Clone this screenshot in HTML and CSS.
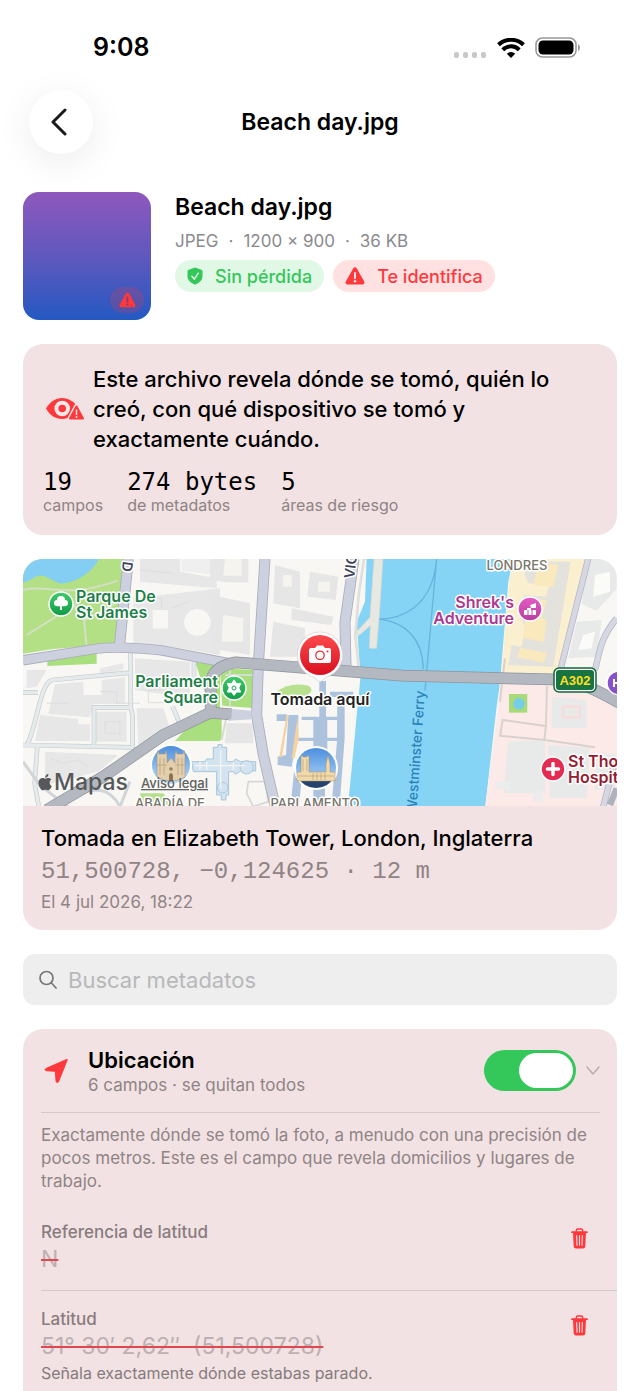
FILE: index.html
```html
<!DOCTYPE html>
<html lang="es">
<head>
<meta charset="utf-8">
<meta name="viewport" content="width=device-width, initial-scale=1">
<title>Beach day.jpg</title>
<link rel="stylesheet" href="styles.css">
</head>
<body>
<svg class="defs" width="0" height="0" aria-hidden="true">
  <symbol id="warning" viewBox="0 0 20 18"><path d="M8.3 1.2a2 2 0 0 1 3.4 0l7.5 13.3a2 2 0 0 1-1.7 3h-15a2 2 0 0 1-1.7-3z" fill="currentColor"/><path class="mark" d="M10 6v5.200" stroke-width="2" stroke-linecap="round"/><circle class="mark-dot" cx="10" cy="14.300" r="1.300"/></symbol>
  <symbol id="trash" viewBox="0 0 17 21"><path d="M5.300 3.800V2.400Q5.300 1 6.700 1h3.600q1.400 0 1.400 1.400v1.400" fill="none" stroke="currentColor" stroke-width="1.500"/><path d="M1 4.200h15" stroke="currentColor" stroke-width="1.700" stroke-linecap="round"/><path d="M2 4.500h13l-.7 13.800q-.1 2.200-2.300 2.200H5q-2.200 0-2.300-2.200z" fill="currentColor"/><path d="M5.700 7.500l.3 9.800M8.500 7.500v9.800M11.300 7.500l-.3 9.800" stroke="#f2e2e3" stroke-width="1.100" stroke-linecap="round"/></symbol>
</svg>

<header class="top">
  <div class="status">
    <span class="time">9:08</span>
    <span class="status-icons">
      <svg width="33" height="8" viewBox="0 0 33 8" fill="#c8c8c8"><rect x="0" y="1" width="5" height="6" rx="2"/><rect x="9" y="1" width="5" height="6" rx="2"/><rect x="18" y="1" width="5" height="6" rx="2"/><rect x="27" y="1" width="5" height="6" rx="2"/></svg>
      <svg class="wifi" width="28" height="20" viewBox="0 0 28 20" fill="none" stroke="#000" stroke-width="4"><path d="M1.500 6.800a18 18 0 0 1 25 0"/><path d="M5.800 11.800a11.500 11.500 0 0 1 16.400 0"/><path d="M9.800 15.800a6 6 0 0 1 8.400 0L14 20z" fill="#000" stroke="none"/></svg>
      <svg width="46" height="22" viewBox="0 0 46 22"><rect x="1" y="1" width="40" height="19" rx="6.500" fill="none" stroke="#999" stroke-width="1.600"/><rect x="3.500" y="3.500" width="35" height="14" rx="4.500"/><path d="M43 7q2 1 2 3.500T43 14z" fill="#999"/></svg>
    </span>
  </div>
  <nav class="nav">
    <button class="back" type="button" aria-label="Atrás"><svg width="18" height="28" viewBox="0 0 18 28"><path d="M15 2L3 14l12 12" fill="none" stroke="#1a1a1a" stroke-width="3" stroke-linecap="round" stroke-linejoin="round"/></svg></button>
    <h1 class="nav-title">Beach day.jpg</h1>
  </nav>
</header>

<main class="content">
  <section class="file">
    <div class="thumb"><span class="thumb-badge"><svg width="17" height="16"><use href="#warning"/></svg></span></div>
    <div class="file-info">
      <h2 class="file-name">Beach day.jpg</h2>
      <p class="file-meta"><span>JPEG</span><span>·</span><span>1200 × 900</span><span>·</span><span>36 KB</span></p>
      <div class="chips">
        <span class="chip chip-ok"><svg width="16" height="18" viewBox="0 0 16 18"><path d="M8 .5l6.300 2.200q1.200.4 1.200 1.600v5.200q0 5-7.500 8.200Q.5 14.500.5 9.500V4.300q0-1.200 1.200-1.600z" fill="currentColor"/><path d="M4.900 9.300l2.400 2.900 4-6" fill="none" stroke="#e1f8e7" stroke-width="1.500" stroke-linecap="round" stroke-linejoin="round"/></svg>Sin pérdida</span>
        <span class="chip chip-risk"><svg width="20" height="18"><use href="#warning"/></svg>Te identifica</span>
      </div>
    </div>
  </section>

  <section class="card summary">
    <div class="summary-lead">
      <svg class="eye" width="42" height="26" viewBox="0 0 42 26"><path d="M3 12.500C7 5.500 13 2 19 2c6.500 0 12.500 3.500 16.500 10.500C31.500 19.500 25.500 23 19 23S7 19.500 3 12.500z" fill="#ff383c"/><circle cx="19.200" cy="12.500" r="5.800" fill="none" stroke="#f8e8e8" stroke-width="4"/><circle cx="19.200" cy="12.500" r="3" fill="#ff383c"/><path d="M33.500 10.500L40 22.500H27z" fill="#f2e2e3" stroke="#f2e2e3" stroke-width="5" stroke-linejoin="round"/><path d="M33.500 10.500L40 22.500H27z" fill="#ff383c" stroke="#ff383c" stroke-width="2" stroke-linejoin="round"/><path d="M33.500 14v4.600" stroke="#f8e8e8" stroke-width="1.500" stroke-linecap="round"/><circle cx="33.500" cy="21" r="1" fill="#f8e8e8"/></svg>
      <p class="summary-text">Este archivo revela dónde se tomó, quién lo creó, con qué dispositivo se tomó y exactamente cuándo.</p>
    </div>
    <dl class="stats">
      <div class="stat"><dd>19</dd><dt>campos</dt></div>
      <div class="stat"><dd>274 bytes</dd><dt>de metadatos</dt></div>
      <div class="stat"><dd>5</dd><dt>áreas de riesgo</dt></div>
    </dl>
  </section>

  <section class="card place">
    <svg class="map" viewBox="0 0 594 247" preserveAspectRatio="xMidYMid slice" role="img" aria-label="Mapa de Westminster">
      <defs>
        <linearGradient id="sky" x2="0" y2="1"><stop stop-color="#4b8fe0"/><stop offset="1" stop-color="#bfe0f8"/></linearGradient>
        <linearGradient id="redPin" x2="0" y2="1"><stop stop-color="#fb4b4c"/><stop offset="1" stop-color="#d90f20"/></linearGradient>
        <linearGradient id="greenPin" x2="0" y2="1"><stop stop-color="#42cb6b"/><stop offset="1" stop-color="#119b48"/></linearGradient>
        <linearGradient id="pinkPin" x2="0" y2="1"><stop stop-color="#e65cc6"/><stop offset="1" stop-color="#b83da0"/></linearGradient>
      </defs>
      <g transform="scale(.3333) translate(-9 -12)">
        <rect x="9" y="12" width="1790" height="750" fill="#f8f7f3"/>
        <!-- west bank -->
        <path d="M9 12h311l-27 255-193 15-91 14z" fill="#b3e085"/>
        <path d="M9 12h228c-20 38-60 68-112 74-34-8-58-42-88-14L9 84z" fill="#83cef2"/>
        <path d="M9 105c80-20 120 30 285-28M192 195l8 80M20 240l160-100M160 150l35 45 110-60" fill="none" stroke="#d5dec6" stroke-width="6"/>
        <path d="M82 316l148-24v34l-148 7zM525 318l75 5v235H465l60-65 45-35z" fill="#a9df7f"/>
        <g fill="#e7e7e8">
          <path d="M360 12h120v38l110 20v30l-230-20zM340 130l260-30v200l-150-25-110-10z"/>
          <path d="M105 388l85-8v40h55v-45l70-8v80h-95l-10 40-125-10zM60 480l115 12v16h35v50H45zM228 470h92v90h-92zM345 310l165 10v110l-165-25zM350 460h80l20 60-95 50zM75 590l220 10-60 50-160 40zM240 340l70-15v20l-70 14zM20 345h60l-30 50-30 5z"/>
        </g>
        <rect x="398" y="165" width="46" height="56" fill="#f8f7f3"/><circle cx="532" cy="202" r="40" fill="#f8f7f3"/>
        <path d="M485 12h110v50l-110-15z" fill="#efefef"/>
        <g fill="none" stroke="#c5ccce" stroke-width="14" stroke-linejoin="round"><path d="M22 568c30-60 38-185 75-193l235-22M332 292v165l6 25v95L9 570M332 457H222v112M52 575l-8 110 12 68M9 412h45M458 455l20 48M522 320v60"/></g>
        <g fill="none" stroke="#e5ebec" stroke-width="10" stroke-linejoin="round"><path d="M22 568c30-60 38-185 75-193l235-22M332 292v165l6 25v95L9 570M332 457H222v112M52 575l-8 110 12 68M9 412h45M458 455l20 48M522 320v60"/></g>
        <path d="M9 620l50 70 90 70M140 730c90-40 130-30 160 25M330 680l-30 75" fill="none" stroke="#d2d5d7" stroke-width="9"/>
        <g fill="none" stroke="#dddede" stroke-width="3"><path d="M240 410h50v35h70M80 445h70M255 500h45v35h-45zM385 405h60v38h-60zM90 610l40 15 45-10 30 20M370 130h55v30M455 160l50-20M360 45l100 10"/></g>
        <path d="M360 715h70l30 40h-90z" fill="#b5df8d"/>
        <g fill="#d3e4f0" stroke="#a7c6da" stroke-width="3"><path d="M515 620h40l5-8h20v-35h14v-8h12v8h14v43h20l6-8 16 8h45v28h-45l-16 10-6-8h-14v70h-8v15h-14v-15h-14v-70h-70z"/><circle cx="680" cy="637" r="20"/><circle cx="608" cy="698" r="16"/></g>
        <path d="M525 632h150M602 585v115M540 620v24M560 620v24M640 622v24" fill="none" stroke="#f4f4f0" stroke-width="4"/>
        <!-- centre blocks -->
        <g transform="translate(570 0)">
          <g fill="#e6e6e6">
            <path d="M0 12h115v70H45l-45-10zM5 120l115 25v155L0 280zM195 30l75 20v110l-80-15zM300 50l85 15-8 70-85-10zM245 160l125 25-6 25-120-15zM190 200l95 20v85H180zM50 505h80v60H45z"/>
          </g>
          <g fill="#f5f4ef"><path d="M45 12h50v50H40zM40 180l60 10v70H35zM325 80h35v30h-37zM220 60h25v35h-27z"/></g>
          <path d="M30 340l112 5v115l-105-8zM0 500l35-10v65H0z" fill="#a9df7f"/>
          <path d="M60 345v110M45 360h95M50 485l-15 70" stroke="#d6ddd0" stroke-width="6" fill="none"/>
          <path d="M200 410q40-30 95-18 18 10 2 25l-40 18h-30l-30-15z" fill="#b7e18f"/>
          <g fill="#adc2dd"><path d="M235 480h30v45l-20 110-42-5v-25l25-5zM328 378h20v110h-20zM310 488h42v100h-42zM275 485h115v10H275zM382 440h22v110l-15 200h-24l16-190zM262 548h125v10H262zM200 478h30v20h-30zM360 410h70v16h-70zM252 650l25 2-10 100h-25zM310 700h35v52h-35z"/></g>
          <path d="M236 480h-6l-22 125h8zM262 490l5 60-14 60h-8z" fill="#f3d3a1"/>
          <path d="M115 680h50l10 60-45 15-20-40z" fill="none" stroke="#d8d8d3" stroke-width="5"/>
        </g>
        <!-- Thames -->
        <path d="M1040 12h440l-15 68-25 305-10 70-35 307H983l12-120 15-160 12-120-2-22-10-140 25-60z" fill="#85d4f6"/>
        <path d="M1040 12h-8l-16 110-10 120 12 110" fill="none" stroke="#dfe0da" stroke-width="8"/>
        <path d="M1062 12h27l-11 170-8 98h-22l3-68-35 30-8-10 42-45z" fill="#e8e8e3" stroke="#d4d5cf" stroke-width="2"/>
        <path d="M1078 192c60 0 160-30 172-180M1078 192c80 10 130 60 132 150M1250 12l-35 395" fill="none" stroke="#69b3dd" stroke-width="4"/>
        <!-- east bank -->
        <g transform="translate(1140 0)">
          <path d="M340 12h225l-95 345-165-5 22-270z" fill="#faefcf"/>
          <path d="M300 380l170 5 120 5 70 40v330H255l40-300z" fill="#fceae9"/>
          <path d="M570 12h90v330l-70 10-110 10z" fill="#f8f7f3"/>
          <path d="M362 20h150L460 335l-135-5 10-60 30 5 10-60-15-30 12-65 65 5 12-35-65-5z" fill="#e3e2dc"/>
          <path d="M380 130l60 5-15 55 15 5-8 65-62-10 5-55zM360 278l80 15-8 30-80-16zM415 25l60 5-15 65-60-5z" fill="#fae9bd"/>
          <path d="M565 12h85v90l-60 65-45-20zM530 200l75-5-15 110-85 5zM455 425l105 10v85H455zM325 560l110-5v160H310zM445 570l125 8-10 150H450zM590 600l55-5v100l-60 10z" fill="#e8e9e9"/>
          <path d="M585 60l45-10v60l-50 15zM550 240l35-10-10 50-40 5z" fill="#fbfbf8"/>
          <path d="M490 455h50v32h-50z" fill="none" stroke="#fbdada" stroke-width="6"/>
          <path d="M480 350l85-340M650 190c-50 60-50 100-65 155M645 620l-35 135M650 700l-20 50" fill="none" stroke="#adb2bf" stroke-width="19"/>
          <path d="M480 350l85-340M650 190c-50 60-50 100-65 155M645 620l-35 135" fill="none" stroke="#d5d8e2" stroke-width="15"/>
          <path d="M300 545l8-50 130 18 3-120M438 513l-5 42-133-13M435 555l150 22M300 440l15-130" fill="none" stroke="#d9d1cd" stroke-width="6"/>
          <rect x="327" y="417" width="55" height="56" fill="#a8da7b"/><circle cx="357" cy="446" r="17" fill="#74cee8"/>
          <path d="M285 680h45v22h-45zM400 715l30-15v40h-30z" fill="#ececec"/>
        </g>
        <!-- main roads -->
        <g fill="none" stroke-linejoin="round">
          <path d="M325 12l-27 265M735 12l-20 318-5 150 20 120 36 155M1002 12l-27 190 3 130" stroke="#a9adb9" stroke-width="33"/>
          <path d="M9 316l215-34q70-10 200 4l210 40" stroke="#a9adb9" stroke-width="31"/>
          <path d="M325 12l-27 265M735 12l-20 318-5 150 20 120 36 155M1002 12l-27 190 3 130" stroke="#cdd1df" stroke-width="28"/>
          <path d="M9 316l215-34q70-10 200 4l210 40" stroke="#cdd1df" stroke-width="26"/>
          <path d="M80 765l170-100 180-125 140-67 65 5M572 475v-90q5-50 75-63l500 40 480 12q60 5 180 75" stroke="#8f939b" stroke-width="35"/>
          <path d="M625 461l70 6v26l-70 4z" fill="#cdd1df"/>
          <path d="M80 765l170-100 180-125 140-67 65 5M572 475v-90q5-50 75-63l500 40 480 12q60 5 180 75" stroke="#b4b8c0" stroke-width="31"/>
        </g>
      </g>

      <g class="halo place-name">
        <g class="park"><text x="53" y="43">Parque De</text><text x="53" y="59">St James</text><text x="195" y="128" class="end">Parliament</text><text x="195" y="144" class="end">Square</text></g>
        <g class="fun"><text x="491" y="49" class="end">Shrek's</text><text x="491" y="65" class="end">Adventure</text></g>
        <g class="care"><text x="545" y="208">St Tho</text><text x="545" y="224">Hospit</text></g>
      </g>
      <g class="halo district"><text x="494" y="11">LONDRES</text><text x="147" y="249">ABADÍA DE</text><text x="292" y="249">PARLAMENTO</text></g>
      <g class="halo street"><text transform="translate(331 20) rotate(-83)">VIC</text><text transform="translate(100 2) rotate(98)">D</text></g>
      <text class="ferry" transform="translate(402 132) rotate(-86)">Westminster Ferry</text>

      <g stroke="#fff" stroke-width="1.500"><circle cx="38" cy="45" r="12" fill="url(#greenPin)"/><circle cx="211" cy="129" r="12" fill="url(#greenPin)"/><circle cx="507" cy="50" r="12" fill="url(#pinkPin)"/><circle cx="530" cy="210" r="12" fill="#e52b52"/><circle cx="596" cy="124" r="12" fill="#8652cc"/></g>
      <path d="M37 51v-4q-6 1-6-3 0-3 3-3 0-4 4-4t4 4q3 0 3 3 0 4-6 3v4z" fill="#fff"/>
      <path d="M211 121.500l2.300 3.400 4-.2-1.800 4 1.800 4-4-.2-2.300 3.400-2.300-3.400-4 .2 1.800-4-1.800-4 4 .2z" fill="#fff" stroke="#fff" stroke-width="1.500" stroke-linejoin="round"/><circle cx="211" cy="129" r="2" fill="none" stroke="#24a956"/>
      <path d="M501 51h3v-2h4v2h5v5h-12zM507 46l6-2v5h-5z" fill="#fff"/><path d="M505 51v5M509 51v5" stroke="#c84bb0"/><path d="M530 204.500v11M524.500 210h11" stroke="#fff" stroke-width="3.500" stroke-linecap="round"/><path d="M591 120v8M591 124h5" stroke="#fff" stroke-width="2"/>
      <rect x="531" y="109" width="42" height="24" rx="5" fill="#fff" stroke="#12673c" stroke-width="1.500"/><rect x="533" y="111" width="38" height="20" rx="3" fill="#187541"/><text class="road-no" x="552" y="126">A302</text>

      <circle cx="148" cy="206" r="21" fill="#fff"/><circle cx="148" cy="206" r="19" fill="url(#sky)"/>
      <path d="M134 218v-22l1-5 1 4h6l1-4 1 5v8l4-5 4 5v-8l1-5 1 4h6l1-4 1 5v22q-14 8-28 0z" fill="#e3cfae" stroke="#a48d68" stroke-width=".5"/>
      <path d="M137 199v17M141 199v17M155 199v17M159 199v17M134 206h10M152 206h10" fill="none" stroke="#b59c74" stroke-width=".7"/><path d="M146 222v-6q2-4 4 0v6z" fill="#8d7350"/><circle cx="148" cy="210" r="1.800" fill="#9c835d"/>
      <circle cx="293" cy="209" r="22" fill="#fff"/><circle cx="293" cy="209" r="20" fill="url(#sky)"/>
      <path d="M275 218h36q-6 11-18 11t-18-11z" fill="#26436c"/>
      <path d="M274 222v-9h4v-15l1-2 1 2h4l1-2 1 2v15h17v-8l2-9 2 9v8h5v9z" fill="#f0d9ad" stroke="#a88f61" stroke-width=".5"/>
      <path d="M280 200v12M284 200v12M290 214v7M294 214v7M298 214v7M302 214v7M275 217h36" fill="none" stroke="#b89b68" stroke-width=".6"/>

      <path d="M297 73a23 23 0 0 0-7 44.800l7 5.200 7-5.200A23 23 0 0 0 297 73z" fill="#fff" stroke="#d9cccc" stroke-width=".7"/>
      <circle cx="297" cy="96" r="20" fill="url(#redPin)"/>
      <path d="M288 89h4l2-2.500h6l2 2.500h4q2 0 2 2v11q0 2-2 2h-18q-2 0-2-2V91q0-2 2-2z" fill="#fff"/><circle cx="297" cy="96.300" r="4.200" fill="none" stroke="#ed3038" stroke-width="1.300"/><circle cx="304.500" cy="92.500" r="1" fill="#ed3038"/>
      <text class="halo pin-label" x="297" y="146">Tomada aquí</text>

      <path class="apple" transform="translate(14 215) scale(.68)" d="M12.152 6.896c-.948 0-2.415-1.078-3.960-1.040-2.040.027-3.910 1.183-4.961 3.014-2.117 3.675-.546 9.103 1.519 12.090 1.013 1.454 2.208 3.090 3.792 3.039 1.520-.065 2.090-.987 3.935-.987 1.831 0 2.350.987 3.960.948 1.637-.026 2.676-1.480 3.676-2.948 1.156-1.688 1.636-3.325 1.662-3.415-.039-.013-3.182-1.221-3.220-4.857-.026-3.040 2.480-4.494 2.597-4.559-1.429-2.090-3.623-2.324-4.390-2.376-2-.156-3.675 1.090-4.610 1.090zM15.530 3.830c.843-1.012 1.400-2.427 1.245-3.830-1.207.052-2.662.805-3.532 1.818-.780.896-1.454 2.338-1.273 3.714 1.338.104 2.715-.688 3.559-1.701"/>
      <text class="brand" x="31" y="231">Mapas</text>
      <a href="#legal"><text class="legal" x="118" y="229">Aviso legal</text></a>
    </svg>
    <div class="place-info">
      <h2 class="place-title">Tomada en Elizabeth Tower, London, Inglaterra</h2>
      <p class="coords">51,500728, −0,124625 · 12 m</p>
      <p class="date">El 4 jul 2026, 18:22</p>
    </div>
  </section>

  <label class="search">
    <svg width="18" height="20" viewBox="0 0 18 20" fill="none" stroke="#777" stroke-width="1.700" stroke-linecap="round"><circle cx="7.500" cy="8" r="6.500"/><path d="M12.300 12.800L17 18"/></svg>
    <input type="search" placeholder="Buscar metadatos" aria-label="Buscar metadatos">
  </label>

  <section class="card group">
    <div class="group-head">
      <svg class="arrow" width="30" height="26" viewBox="0 0 30 26"><path d="M26 2.500Q27 1 25 1.700L5 10.500q-2 1 0 2.200l9.300.6.8 10.200q1 2.300 2.400.2z" fill="#ff383c" stroke="#ff383c" stroke-linejoin="round"/></svg>
      <div class="group-text">
        <h2 class="group-title" id="location">Ubicación</h2>
        <p class="group-sub">6 campos · se quitan todos</p>
      </div>
      <input class="switch" type="checkbox" role="switch" checked aria-labelledby="location">
      <button class="toggle" type="button" aria-label="Contraer" aria-expanded="true"><svg width="14" height="10" viewBox="0 0 14 10"><path d="M1 1l6 7 6-7" fill="none" stroke="#b9adaf" stroke-width="1.500" stroke-linecap="round" stroke-linejoin="round"/></svg></button>
    </div>
    <p class="group-desc">Exactamente dónde se tomó la foto, a menudo con una precisión de pocos metros. Este es el campo que revela domicilios y lugares de trabajo.</p>
    <ul class="fields">
      <li class="field">
        <div><h3 class="field-name">Referencia de latitud</h3><p class="field-value"><del>N</del></p></div>
        <button class="remove" type="button" aria-label="Quitar Referencia de latitud"><svg width="17" height="21"><use href="#trash"/></svg></button>
      </li>
      <li class="field">
        <div><h3 class="field-name">Latitud</h3><p class="field-value"><del>51° 30′ 2,62″&nbsp; (51,500728)</del></p><p class="field-note">Señala exactamente dónde estabas parado.</p></div>
        <button class="remove" type="button" aria-label="Quitar Latitud"><svg width="17" height="21"><use href="#trash"/></svg></button>
      </li>
    </ul>
  </section>
</main>
</body>
</html>
```
FILE: styles.css
```css
:root {
  --card: #f2e2e3;
  --muted: #8f8486;
  --line: #d5c8ca;
  --red: #ff383c;
  --green: #34c759;
  --mark: #ffe1e2;
}
* { box-sizing: border-box; }
body {
  margin: 0;
  min-height: 100vh;
  display: flex;
  flex-direction: column;
  background: #fff;
  color: #000;
  font-family: Inter, "Noto Sans", sans-serif;
}
h1, h2, h3, p, dl, dd, dt, ul { margin: 0; padding: 0; font-weight: 400; }
button { border: 0; padding: 0; background: none; cursor: pointer; }
svg { display: block; flex: none; }
.defs { position: absolute; }

.status { display: flex; justify-content: space-between; align-items: center; padding: 33px 59px 0 93px; height: 62px; }
.time { font-size: 25px; line-height: 29px; font-weight: 600; }
.status-icons { display: flex; align-items: center; gap: 10px; }
.status-icons svg:first-child { align-self: flex-end; }
.nav { display: grid; grid-template-columns: 1fr auto 1fr; align-items: center; padding: 28px 29px 38px; }
.back {
  width: 64px; height: 64px; border-radius: 50%; background: #fff;
  display: flex; align-items: center; justify-content: center;
  padding-right: 4px;
  box-shadow: 0 8px 36px rgba(0, 0, 0, .08);
}
.nav-title { font-size: 23px; line-height: 30px; font-weight: 600; }

.content { flex: 1; display: flex; flex-direction: column; gap: 24px; padding: 0 23px; }
.file { display: flex; gap: 24px; }
.thumb {
  flex: none; width: 128px; height: 128px; border-radius: 16px;
  background: linear-gradient(#8f58bd, #5a58bd 55%, #2459c2);
  display: flex; align-items: flex-end; justify-content: flex-end; padding: 7px;
}
.thumb-badge {
  --mark: #793f82;
  width: 34px; height: 26px; border-radius: 13px; background: rgba(255, 56, 60, .2);
  display: flex; align-items: center; justify-content: center; color: var(--red);
}
.mark { stroke: var(--mark); }
.mark-dot { fill: var(--mark); }
.file-name { font-size: 23px; line-height: 30px; font-weight: 600; }
.file-meta { display: flex; gap: 10px; font-size: 17px; line-height: 24px; margin: 7px 0; color: #8a8a8e; }
.chips { display: flex; gap: 9px; }
.chip { display: flex; align-items: center; height: 32px; border-radius: 16px; padding: 0 12px; gap: 12px; font-size: 18px; font-weight: 500; white-space: nowrap; }
.chip-ok { background: #e1f8e7; color: var(--green); }
.chip-risk { background: #ffe1e2; color: var(--red); }

.card { background: var(--card); border-radius: 20px; overflow: hidden; }
.summary { padding: 20px; display: grid; gap: 15px; }
.summary-lead { display: flex; align-items: center; gap: 8px; }
.summary-text { font-size: 22px; line-height: 30px; font-weight: 500; }
.stats { display: flex; gap: 24px; }
.stat { display: flex; flex-direction: column; }
.stat dd { font: 24px/26px "DejaVu Sans Mono", monospace; }
.stat dt { font-size: 16px; line-height: 20px; color: var(--muted); }

.map { width: 100%; height: auto; }
.halo { paint-order: stroke; stroke: #fff; stroke-width: 3px; stroke-linejoin: round; }
.place-name { font-size: 16px; font-weight: 600; }
.park { fill: #1d7f47; }
.fun { fill: #ad3792; }
.care { fill: #941c32; }
.end, .ferry { text-anchor: end; }
.district { font-size: 13px; font-weight: 500; fill: #77746a; text-anchor: middle; }
.street { font-size: 14px; font-weight: 600; fill: #3f4358; }
.ferry { font-size: 14px; font-weight: 500; fill: #2b82b8; }
.pin-label { font-size: 16px; font-weight: 600; fill: #222; text-anchor: middle; }
.road-no { font: 700 13px "Liberation Sans", sans-serif; fill: #ffdf22; text-anchor: middle; }
.apple, .brand { fill: #56585a; }
.brand { font-size: 23px; font-weight: 500; }
.legal { font-size: 13px; font-weight: 500; fill: #5f6161; text-decoration: underline; }

.place-info { padding: 18px; display: grid; gap: 6px; }
.place-title { font-size: 22px; line-height: 28px; font-weight: 500; }
.coords { font: 24px/28px "Liberation Mono", monospace; color: var(--muted); }
.date { font-size: 17px; line-height: 20px; color: var(--muted); }

.search { display: flex; align-items: center; gap: 11px; height: 51px; padding: 0 16px; border-radius: 12px; background: #eee; }
.search input { flex: 1; min-width: 0; border: 0; padding: 0; background: none; font: 22px/30px Inter, sans-serif; outline: 0; }
.search input::placeholder { color: #b8b8ba; }

.group { flex: 1; border-radius: 20px 20px 0 0; padding-left: 18px; }
.group-head { display: flex; align-items: center; height: 84px; margin-right: 17px; border-bottom: 1px solid var(--line); }
.group-text { flex: 1; padding-left: 17px; }
.group-title { font-size: 22px; line-height: 28px; font-weight: 600; }
.group-sub { font-size: 17px; line-height: 22px; color: var(--muted); }
.switch { appearance: none; margin: 0; width: 92px; height: 41px; border-radius: 21px; background: var(--green); display: flex; justify-content: flex-end; padding: 3px; }
.switch::after { content: ""; width: 54px; height: 35px; border-radius: 18px; background: #fff; }
.switch:not(:checked) { background: #cfc4c5; justify-content: flex-start; }
.toggle { margin-left: 10px; }
.group-desc { padding: 11px 17px 11px 0; font-size: 17px; line-height: 23px; color: var(--muted); }
.fields { list-style: none; }
.field { display: flex; justify-content: space-between; align-items: flex-start; padding: 17px 29px 15px 0; border-bottom: 1px solid var(--line); }
.field:last-child { border-bottom: 0; padding-bottom: 7px; }
.field-name { font-size: 17px; line-height: 22px; font-weight: 500; color: #887c7f; }
.field-value { font-size: 23px; line-height: 32px; color: #bdb0b2; }
.field-value del { text-decoration: line-through 2px #e0474f; }
.field-note { font-size: 16px; line-height: 22px; color: #857b7d; }
.remove { display: flex; padding-top: 7px; color: var(--red); }
```
